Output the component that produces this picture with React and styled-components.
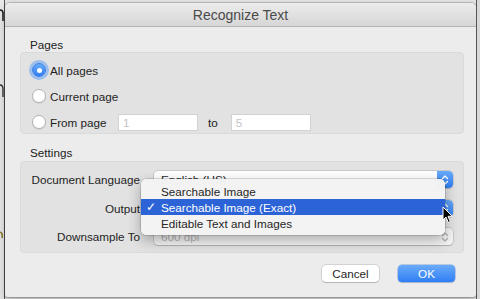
import styled, { createGlobalStyle } from "styled-components";

const Global = createGlobalStyle`
  html, body {
    margin: 0;
    padding: 0;
    background: #e6e6e6;
    font-family: "Liberation Sans", Arial, sans-serif;
    overflow: hidden;
  }
`;

const Screen = styled.div`
  position: relative;
  width: 480px;
  height: 299px;
  display: flex;
  background: #e4e4e4;
  overflow: hidden;
`;

const BackStrip = styled.div`
  width: ${(p) => p.w}px;
  flex: none;
  display: flex;
  flex-direction: column;
  overflow: hidden;
  background: ${(p) => p.bg};
  border-${(p) => p.side}: 1px solid #555;
`;

const Scrap = styled.svg`
  flex: none;
  margin-top: ${(p) => p.mt}px;
`;

const Dialog = styled.div`
  margin-top: 3px;
  width: 471px;
  height: 294px;
  flex: none;
  display: flex;
  flex-direction: column;
  background: #ececec;
  border-radius: 5px 5px 3px 3px;
  box-shadow: 0 0 0 1px rgba(0, 0, 0, 0.18), 0 4px 10px rgba(0, 0, 0, 0.25);
  overflow: hidden;
`;

const TitleBar = styled.div`
  height: 22px;
  flex: none;
  display: flex;
  align-items: center;
  justify-content: center;
  background: linear-gradient(#ececec, #d6d6d6);
  border-bottom: 1px solid #b4b4b4;
  font-size: 14px;
  color: #4a4a4a;
  padding-top: 1px;
`;

const Content = styled.div`
  position: relative;
  flex: 1;
  display: flex;
  flex-direction: column;
  padding: 10px 12px 0 15px;
`;

const SectionLabel = styled.div`
  font-size: 11.7px;
  line-height: 15px;
  color: #222;
  padding-left: 10px;
  margin-top: ${(p) => p.mt || 0}px;
`;

const GroupBox = styled.div`
  position: relative;
  display: flex;
  flex-direction: column;
  gap: ${(p) => p.gap}px;
  background: #e2e2e2;
  border: 1px solid #dadada;
  border-radius: 4px;
  padding: ${(p) => p.pad};
  margin-top: ${(p) => p.mt || 0}px;
`;

const RadioRow = styled.label`
  display: flex;
  align-items: center;
  height: 20px;
  font-size: 11.7px;
  color: #1e1e1e;
`;

const RadioDot = styled.span`
  width: 14px;
  height: 14px;
  flex: none;
  border-radius: 50%;
  box-sizing: border-box;
  margin-right: 4px;
  display: flex;
  align-items: center;
  justify-content: center;
  background: ${(p) => (p.on ? "linear-gradient(#6aabf9, #2f7ef4)" : "#fff")};
  border: 1px solid ${(p) => (p.on ? "#3a7fe6" : "#b3b3b3")};
  box-shadow: ${(p) =>
    p.on ? "0 0 0 3px rgba(96, 160, 246, 0.55)" : "0 1px 1px rgba(0,0,0,0.08)"};
  &::after {
    content: "";
    display: ${(p) => (p.on ? "block" : "none")};
    width: 5px;
    height: 5px;
    border-radius: 50%;
    background: #fff;
  }
`;

const RadioText = styled.span`
  width: ${(p) => p.w || "auto"};
`;

const Field = styled.div`
  width: ${(p) => p.w}px;
  height: 17px;
  box-sizing: border-box;
  background: #fff;
  border: 1px solid #d2d2d2;
  font-size: 11.7px;
  line-height: 15px;
  color: #c4c4c4;
  padding-left: 4px;
`;

const ToText = styled.span`
  margin: 0 13px 0 10px;
`;

const SettingRow = styled.div`
  display: flex;
  align-items: center;
  height: 17px;
`;

const RowLabel = styled.div`
  width: 119px;
  flex: none;
  text-align: right;
  font-size: 11.7px;
  color: #1e1e1e;
  margin-right: 14px;
`;

const Popup = styled.div`
  width: 299px;
  height: 17px;
  box-sizing: border-box;
  display: flex;
  align-items: center;
  background: ${(p) => (p.disabled ? "#f4f4f4" : "#fff")};
  border-radius: 4px;
  box-shadow: 0 0 0 0.5px rgba(0, 0, 0, 0.22), 0 1px 1px rgba(0, 0, 0, 0.12);
  font-size: 11.7px;
  color: ${(p) => (p.disabled ? "#b4b4b4" : "#1e1e1e")};
  padding-left: 7px;
  overflow: hidden;
`;

const PopupText = styled.span`
  flex: 1;
`;

const Stepper = styled.span`
  width: 16px;
  height: 17px;
  flex: none;
  display: flex;
  align-items: center;
  justify-content: center;
  background: ${(p) => (p.disabled ? "transparent" : "linear-gradient(#68a9f8, #2f7ef4)")};
  border-radius: 0 4px 4px 0;
`;

const Menu = styled.div`
  position: absolute;
  left: 120px;
  top: 17px;
  width: 304px;
  padding: 4px 0;
  background: rgba(243, 243, 243, 0.98);
  border-radius: 5px;
  box-shadow: 0 0 0 0.5px rgba(0, 0, 0, 0.25), 0 5px 14px rgba(0, 0, 0, 0.3);
  z-index: 2;
`;

const MenuItem = styled.div`
  height: 16px;
  display: flex;
  align-items: center;
  font-size: 11.7px;
  color: ${(p) => (p.active ? "#fff" : "#262626")};
  background: ${(p) => (p.active ? "#2c64d8" : "transparent")};
`;

const Check = styled.span`
  width: 20px;
  flex: none;
  text-align: center;
  font-size: 12px;
`;

const ButtonRow = styled.div`
  display: flex;
  justify-content: flex-end;
  gap: 19px;
  margin-top: 12px;
  padding-right: 9px;
`;

const Button = styled.div`
  width: 57px;
  height: 17px;
  display: flex;
  align-items: center;
  justify-content: center;
  border-radius: 4px;
  font-size: 11.7px;
  color: ${(p) => (p.primary ? "#fff" : "#1e1e1e")};
  background: ${(p) => (p.primary ? "linear-gradient(#6aabf9, #2f7ef4)" : "#fff")};
  box-shadow: ${(p) =>
    p.primary
      ? "0 0 0 0.5px rgba(30, 90, 200, 0.5), 0 1px 1px rgba(0,0,0,0.12)"
      : "0 0 0 0.5px rgba(0, 0, 0, 0.22), 0 1px 1px rgba(0, 0, 0, 0.14)"};
`;

const Cursor = styled.svg`
  position: absolute;
  left: 442px;
  top: 206px;
  z-index: 5;
`;

const Chevrons = ({ color }) => (
  <svg width="8" height="12" viewBox="0 0 8 12">
    <path
      d="M1.5 4.5 L4 2 L6.5 4.5 M1.5 7.5 L4 10 L6.5 7.5"
      fill="none"
      stroke={color}
      strokeWidth="1.3"
      strokeLinecap="round"
      strokeLinejoin="round"
    />
  </svg>
);

const Radio = ({ on, children, w }) => (
  <RadioRow>
    <RadioDot on={on} />
    <RadioText w={w}>{children}</RadioText>
  </RadioRow>
);

export default function App() {
  return (
    <>
      <Global />
      <Screen>
        <BackStrip w={4} bg="#e9e9e9" side="right">
          <Scrap mt={9} width="4" height="12">
            <path d="M0 1 Q3 1 3 4 L3 12" fill="none" stroke="#222" strokeWidth="1.6" />
          </Scrap>
          <Scrap mt={62} width="4" height="14">
            <path d="M0 2 Q3 2 3 6 L3 14" fill="none" stroke="#333" strokeWidth="1.4" />
          </Scrap>
          <Scrap mt={133} width="4" height="10">
            <path d="M0 2 Q3 3 2 8" fill="none" stroke="#8a7a30" strokeWidth="1.6" />
          </Scrap>
        </BackStrip>
        <Dialog>
          <TitleBar>Recognize Text</TitleBar>
          <Content>
            <SectionLabel>Pages</SectionLabel>
            <GroupBox gap={6} pad="7px 10px 1px 11px">
              <Radio on>All pages</Radio>
              <Radio>Current page</Radio>
              <RadioRow>
                <RadioDot />
                <RadioText w="68px">From page</RadioText>
                <Field w={80}>1</Field>
                <ToText>to</ToText>
                <Field w={80}>5</Field>
              </RadioRow>
            </GroupBox>

            <SectionLabel mt={11}>Settings</SectionLabel>
            <GroupBox gap={11.5} pad="9px 10px 7px 0" mt={1}>
              <SettingRow>
                <RowLabel>Document Language</RowLabel>
                <Popup>
                  <PopupText>English (US)</PopupText>
                  <Stepper>
                    <Chevrons color="#fff" />
                  </Stepper>
                </Popup>
              </SettingRow>
              <SettingRow>
                <RowLabel>Output</RowLabel>
                <Popup>
                  <PopupText>Searchable Image (Exact)</PopupText>
                  <Stepper>
                    <Chevrons color="#fff" />
                  </Stepper>
                </Popup>
              </SettingRow>
              <SettingRow>
                <RowLabel>Downsample To</RowLabel>
                <Popup disabled>
                  <PopupText>600 dpi</PopupText>
                  <Stepper disabled>
                    <Chevrons color="#b0b0b0" />
                  </Stepper>
                </Popup>
              </SettingRow>
              <Menu>
                <MenuItem>
                  <Check />
                  Searchable Image
                </MenuItem>
                <MenuItem active>
                  <Check>✓</Check>
                  Searchable Image (Exact)
                </MenuItem>
                <MenuItem>
                  <Check />
                  Editable Text and Images
                </MenuItem>
              </Menu>
            </GroupBox>

            <ButtonRow>
              <Button>Cancel</Button>
              <Button primary>OK</Button>
            </ButtonRow>
          </Content>
        </Dialog>
        <BackStrip w={5} bg="#d8d8d8" side="left" />
        <Cursor width="12" height="18" viewBox="0 0 12 18">
          <path
            d="M1 1 L1 14 L4 11 L6.3 16.5 L8.3 15.6 L6 10.3 L10.3 10.3 Z"
            fill="#000"
            stroke="#fff"
            strokeWidth="1"
            strokeLinejoin="round"
          />
        </Cursor>
      </Screen>
    </>
  );
}
